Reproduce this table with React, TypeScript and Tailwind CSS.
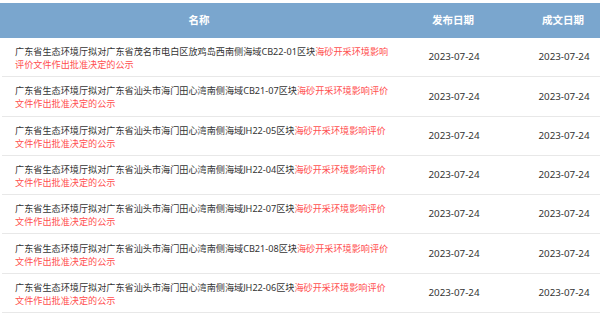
const rows = [
  {
    line1: "广东省生态环境厅拟对广东省茂名市电白区放鸡岛西南侧海域CB22-01区块",
    red1: "海砂开采环境影响",
    red2: "评价文件作出批准决定的公示",
  },
  {
    line1: "广东省生态环境厅拟对广东省汕头市海门田心湾南侧海域CB21-07区块",
    red1: "海砂开采环境影响评价",
    red2: "文件作出批准决定的公示",
  },
  {
    line1: "广东省生态环境厅拟对广东省汕头市海门田心湾南侧海域JH22-05区块",
    red1: "海砂开采环境影响评价",
    red2: "文件作出批准决定的公示",
  },
  {
    line1: "广东省生态环境厅拟对广东省汕头市海门田心湾南侧海域JH22-04区块",
    red1: "海砂开采环境影响评价",
    red2: "文件作出批准决定的公示",
  },
  {
    line1: "广东省生态环境厅拟对广东省汕头市海门田心湾南侧海域JH22-07区块",
    red1: "海砂开采环境影响评价",
    red2: "文件作出批准决定的公示",
  },
  {
    line1: "广东省生态环境厅拟对广东省汕头市海门田心湾南侧海域CB21-08区块",
    red1: "海砂开采环境影响评价",
    red2: "文件作出批准决定的公示",
  },
  {
    line1: "广东省生态环境厅拟对广东省汕头市海门田心湾南侧海域JH22-06区块",
    red1: "海砂开采环境影响评价",
    red2: "文件作出批准决定的公示",
  },
]

export default function App() {
  return (
    <div
      className="w-[600px] h-[319px] overflow-hidden bg-white pt-[3px]"
      style={{ fontFamily: '"Noto Sans", "Noto Sans CJK SC", sans-serif' }}
    >
      <div className="w-[618px]">
        {/* header */}
        <div className="grid grid-cols-[398px_110px_110px] h-[35px] items-center bg-[#7aa6ce] text-white font-bold text-[10.5px]">
          <div className="text-center">名称</div>
          <div className="text-center">发布日期</div>
          <div className="text-center">成文日期</div>
        </div>

        {/* rows */}
        {rows.map((row, i) => (
          <div
            key={i}
            className="grid grid-cols-[398px_110px_110px] h-[39.3px] items-center border-b-[1.5px] border-[#e8e8e8] ml-[2px] text-[#333]"
          >
            <div className="pl-[13px] pt-[2px] text-[9.15px] leading-[13px] whitespace-nowrap">
              {row.line1}
              <span className="text-[#ff4f4f]">{row.red1}</span>
              <br />
              <span className="text-[#ff4f4f]">{row.red2}</span>
            </div>
            <div className="text-center -ml-[2px] pt-[1px] text-[9.8px]">2023-07-24</div>
            <div className="text-center -ml-[2px] pt-[1px] text-[9.8px]">2023-07-24</div>
          </div>
        ))}
      </div>
    </div>
  )
}
